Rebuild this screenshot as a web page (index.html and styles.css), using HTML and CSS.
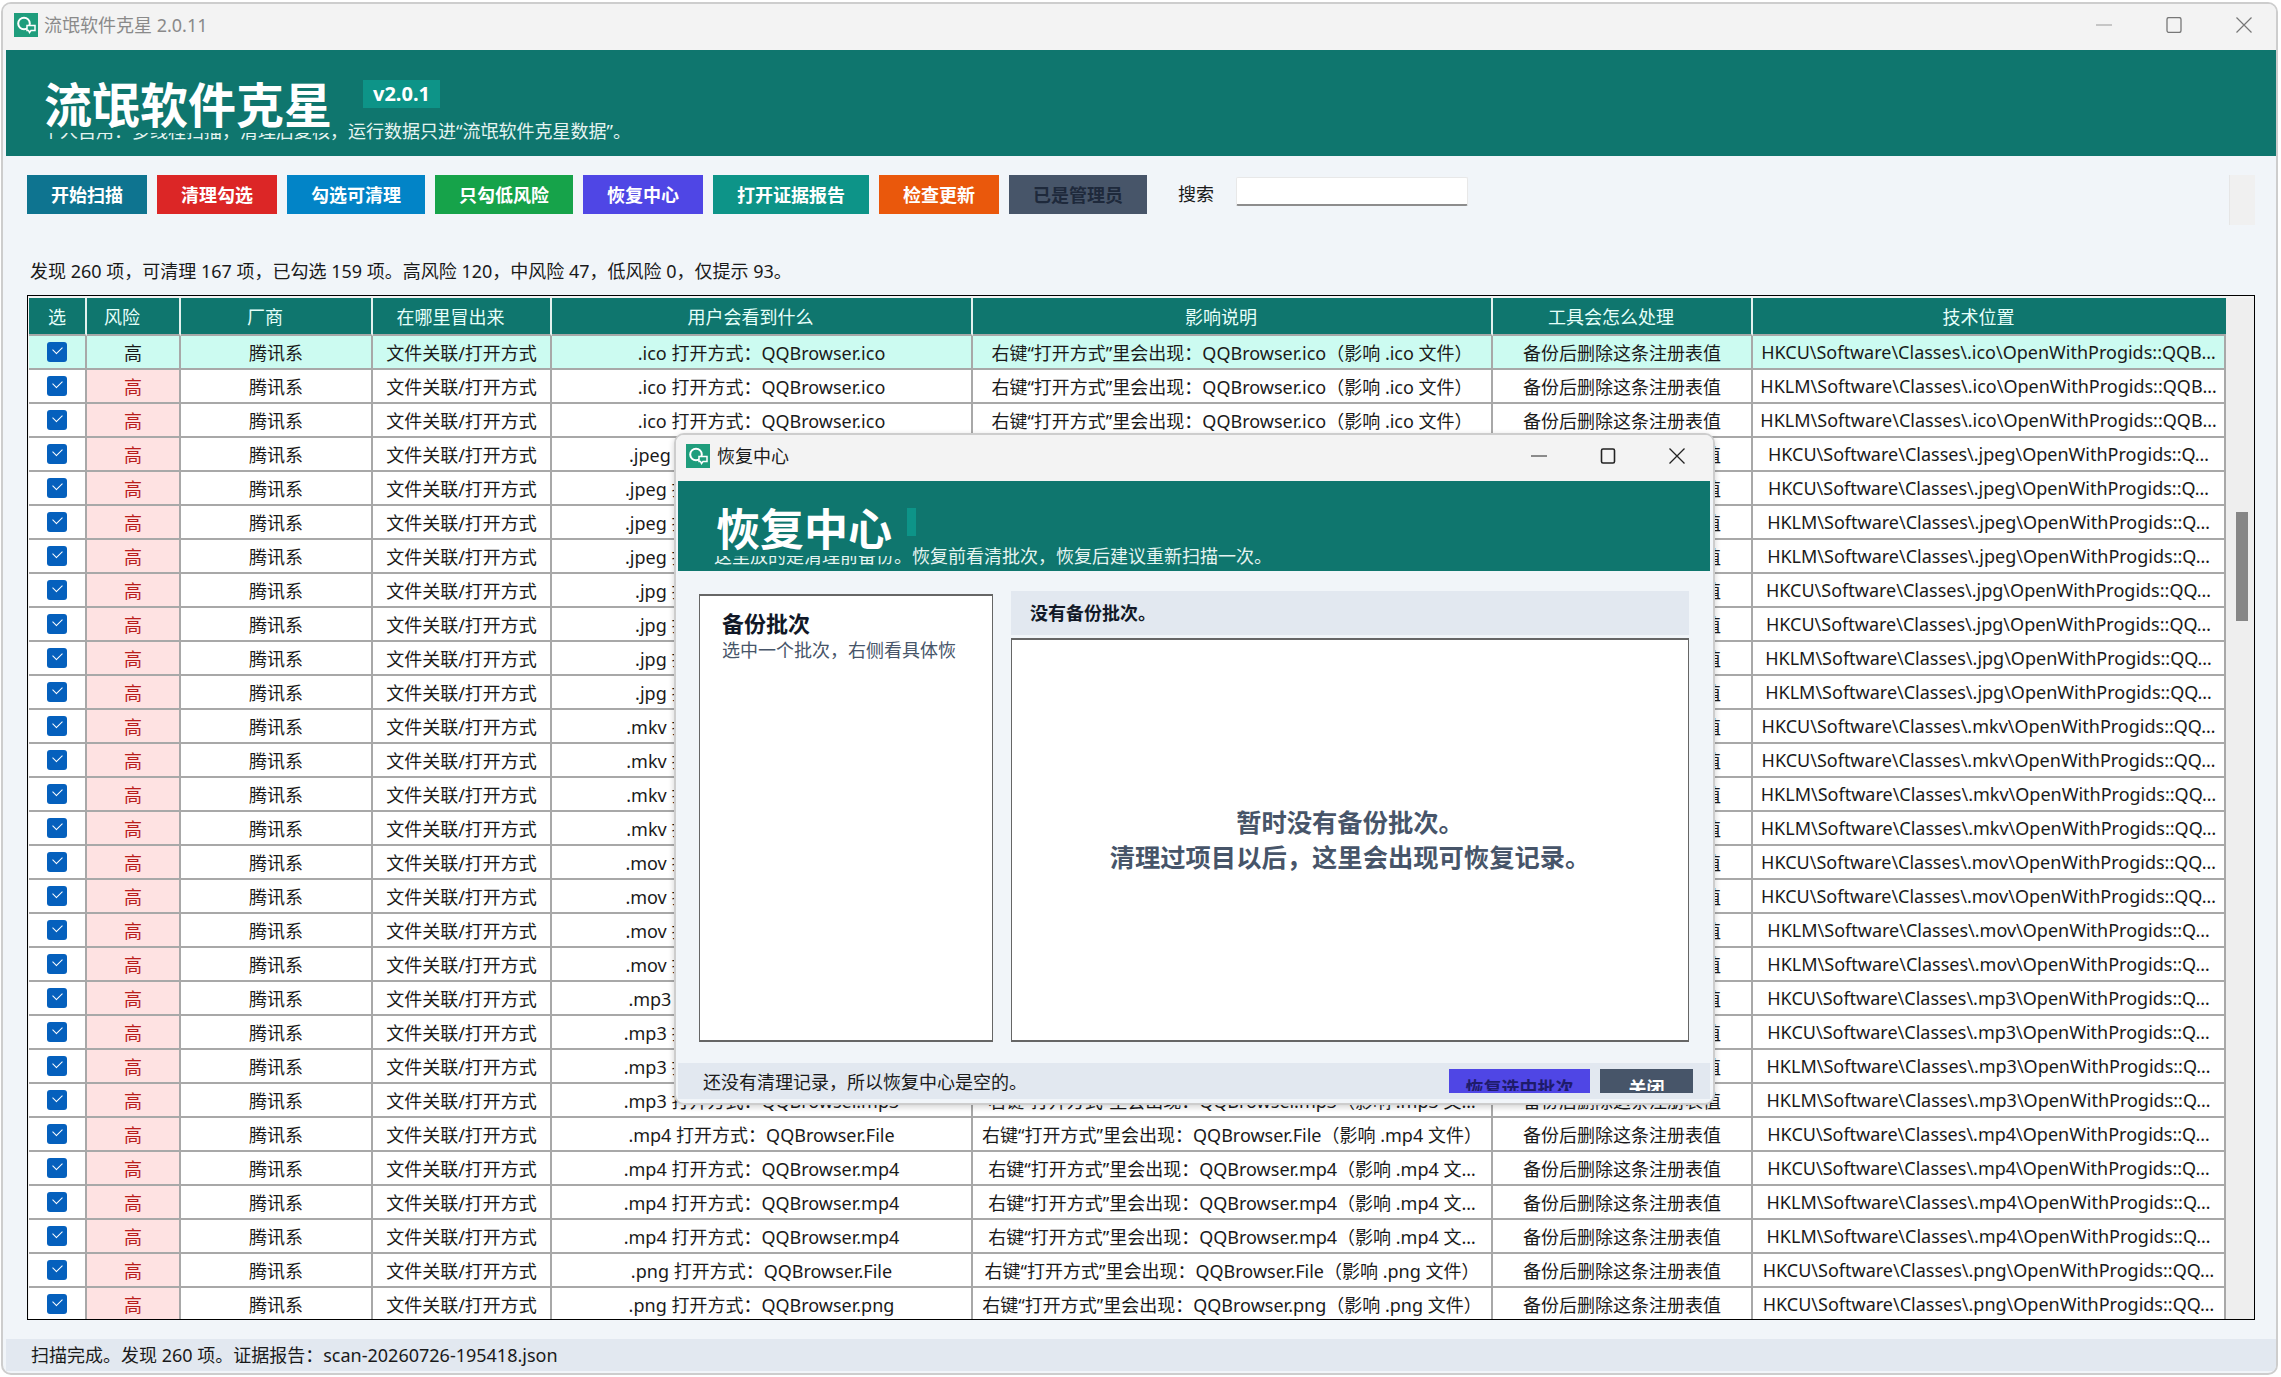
FILE: index.html
```html
<!DOCTYPE html>
<html lang="zh-CN">
<head>
    <meta charset="UTF-8">
    <meta name="viewport" content="width=device-width, initial-scale=1.0">
    <title>流氓软件克星 2.0.11</title>
    <link rel="stylesheet" href="styles.css">
</head>
<body>
    <div class="window">
        <div class="titlebar">
            <svg class="app-icon" viewBox="0 0 24 24"><rect width="24" height="24" fill="#1f9d7c"/><circle cx="10" cy="10.5" r="5.8" fill="none" stroke="#fff" stroke-width="2"/><path d="M13 12.5h8v5h-4l-1.5 2-1-2H13z" fill="#1f9d7c" stroke="#fff" stroke-width="1.5"/></svg>
            <span class="titlebar-text">流氓软件克星 2.0.11</span>
            <div class="win-controls">
                <svg viewBox="0 0 16 16"><path d="M0 8h16" stroke="#999" fill="none"/></svg>
                <svg viewBox="0 0 16 16"><rect x="1" y="0.5" width="14" height="15" rx="2" stroke="#777" fill="none" stroke-width="1.3"/></svg>
                <svg viewBox="0 0 16 16"><path d="M0.5 0.5l15 15M15.5 0.5l-15 15" stroke="#777" fill="none" stroke-width="1.2"/></svg>
            </div>
        </div>

        <div class="hero">
            <div class="hero-top">
                <h1 class="hero-title">流氓软件克星</h1>
                <span class="badge">v2.0.1</span>
            </div>
            <p class="hero-sub">个人自用&#xFF1A;多线程扫描&#xFF0C;清理后复核&#xFF0C;运行数据只进“流氓软件克星数据”。</p>
        </div>

        <div class="toolbar">
            <button class="btn btn-scan">开始扫描</button>
            <button class="btn btn-clean">清理勾选</button>
            <button class="btn btn-pick">勾选可清理</button>
            <button class="btn btn-low">只勾低风险</button>
            <button class="btn btn-restore">恢复中心</button>
            <button class="btn btn-report">打开证据报告</button>
            <button class="btn btn-update">检查更新</button>
            <button class="btn btn-admin">已是管理员</button>
            <label class="search-label">搜索</label>
            <input class="search-input" type="text">
            <div class="toolbar-tail"></div>
        </div>

        <p class="summary">发现 260 项&#xFF0C;可清理 167 项&#xFF0C;已勾选 159 项。高风险 120&#xFF0C;中风险 47&#xFF0C;低风险 0&#xFF0C;仅提示 93。</p>

        <div class="table-frame">
            <table class="results">
                <colgroup>
                    <col class="c-pick"><col class="c-risk"><col class="c-vendor"><col class="c-where">
                    <col class="c-see"><col class="c-effect"><col class="c-action"><col class="c-path">
                </colgroup>
                <thead>
                    <tr><th>选</th><th>风险</th><th>厂商</th><th>在哪里冒出来</th><th>用户会看到什么</th><th>影响说明</th><th>工具会怎么处理</th><th>技术位置</th></tr>
                </thead>
                <tbody id="rows"></tbody>
            </table>
            <div class="scrollbar"><div class="scroll-thumb"></div></div>
        </div>

        <div class="statusbar">扫描完成。发现 260 项。证据报告&#xFF1A;scan-20260726-195418.json</div>
    </div>

    <div class="dialog">
        <div class="titlebar dialog-titlebar">
            <svg class="app-icon" viewBox="0 0 24 24"><rect width="24" height="24" fill="#1f9d7c"/><circle cx="10" cy="10.5" r="5.8" fill="none" stroke="#fff" stroke-width="2"/><path d="M13 12.5h8v5h-4l-1.5 2-1-2H13z" fill="#1f9d7c" stroke="#fff" stroke-width="1.5"/></svg>
            <span class="dialog-title">恢复中心</span>
            <div class="win-controls dialog-controls">
                <svg viewBox="0 0 16 16"><path d="M0 8h16" stroke="#222" fill="none"/></svg>
                <svg viewBox="0 0 16 16"><rect x="1.5" y="1" width="13" height="14" rx="1.5" stroke="#222" fill="none" stroke-width="1.6"/></svg>
                <svg viewBox="0 0 16 16"><path d="M0.5 0.5l15 15M15.5 0.5l-15 15" stroke="#222" fill="none" stroke-width="1.3"/></svg>
            </div>
        </div>
        <div class="dialog-hero">
            <div class="dialog-hero-top">
                <h2 class="dialog-heading">恢复中心</h2>
                <span class="dialog-badge"></span>
            </div>
            <p class="dialog-sub">这里放的是清理前备份。恢复前看清批次&#xFF0C;恢复后建议重新扫描一次。</p>
        </div>
        <div class="dialog-body">
            <div class="batch-panel">
                <div class="batch-title">备份批次</div>
                <div class="batch-hint">选中一个批次&#xFF0C;右侧看具体恢</div>
            </div>
            <div class="detail">
                <div class="detail-bar">没有备份批次。</div>
                <div class="detail-box">暂时没有备份批次。<br>清理过项目以后&#xFF0C;这里会出现可恢复记录。</div>
            </div>
        </div>
        <div class="dialog-footer">
            <span class="footer-text">还没有清理记录&#xFF0C;所以恢复中心是空的。</span>
            <button class="btn-small btn-restore"><span>恢复选中批次</span></button>
            <button class="btn-small btn-close"><span>关闭</span></button>
        </div>
    </div>

    <script>
        // [扩展名, 关联程序, 影响说明尾部, 技术位置 hive, 路径尾部]
        const rows = [
            ['ico', 'QQBrowser.ico', '.ico 文件\uFF09', 'HKCU', 'QQB…'],
            ['ico', 'QQBrowser.ico', '.ico 文件\uFF09', 'HKLM', 'QQB…'],
            ['ico', 'QQBrowser.ico', '.ico 文件\uFF09', 'HKLM', 'QQB…'],
            ['jpeg', 'QQBrowser.File', '.jpeg 文件\uFF09', 'HKCU', 'Q…'],
            ['jpeg', 'QQBrowser.jpeg', '.jpeg 文…', 'HKCU', 'Q…'],
            ['jpeg', 'QQBrowser.jpeg', '.jpeg 文…', 'HKLM', 'Q…'],
            ['jpeg', 'QQBrowser.jpeg', '.jpeg 文…', 'HKLM', 'Q…'],
            ['jpg', 'QQBrowser.jpg', '.jpg 文件\uFF09', 'HKCU', 'QQ…'],
            ['jpg', 'QQBrowser.jpg', '.jpg 文件\uFF09', 'HKCU', 'QQ…'],
            ['jpg', 'QQBrowser.jpg', '.jpg 文件\uFF09', 'HKLM', 'QQ…'],
            ['jpg', 'QQBrowser.jpg', '.jpg 文件\uFF09', 'HKLM', 'QQ…'],
            ['mkv', 'QQBrowser.mkv', '.mkv 文件\uFF09', 'HKCU', 'QQ…'],
            ['mkv', 'QQBrowser.mkv', '.mkv 文件\uFF09', 'HKCU', 'QQ…'],
            ['mkv', 'QQBrowser.mkv', '.mkv 文件\uFF09', 'HKLM', 'QQ…'],
            ['mkv', 'QQBrowser.mkv', '.mkv 文件\uFF09', 'HKLM', 'QQ…'],
            ['mov', 'QQBrowser.mov', '.mov 文件\uFF09', 'HKCU', 'QQ…'],
            ['mov', 'QQBrowser.mov', '.mov 文件\uFF09', 'HKCU', 'QQ…'],
            ['mov', 'QQBrowser.mov', '.mov 文件\uFF09', 'HKLM', 'Q…'],
            ['mov', 'QQBrowser.mov', '.mov 文件\uFF09', 'HKLM', 'Q…'],
            ['mp3', 'QQBrowser.File', '.mp3 文件\uFF09', 'HKCU', 'Q…'],
            ['mp3', 'QQBrowser.mp3', '.mp3 文…', 'HKCU', 'Q…'],
            ['mp3', 'QQBrowser.mp3', '.mp3 文…', 'HKLM', 'Q…'],
            ['mp3', 'QQBrowser.mp3', '.mp3 文…', 'HKLM', 'Q…'],
            ['mp4', 'QQBrowser.File', '.mp4 文件\uFF09', 'HKCU', 'Q…'],
            ['mp4', 'QQBrowser.mp4', '.mp4 文…', 'HKCU', 'Q…'],
            ['mp4', 'QQBrowser.mp4', '.mp4 文…', 'HKLM', 'Q…'],
            ['mp4', 'QQBrowser.mp4', '.mp4 文…', 'HKLM', 'Q…'],
            ['png', 'QQBrowser.File', '.png 文件\uFF09', 'HKCU', 'QQ…'],
            ['png', 'QQBrowser.png', '.png 文件\uFF09', 'HKCU', 'QQ…']
        ];

        const tbody = document.getElementById('rows');
        tbody.innerHTML = rows.map(([ext, app, tail, hive, end], i) => `
            <tr class="${i === 0 ? 'selected' : ''}">
                <td><span class="check"></span></td>
                <td class="risk-high">高</td>
                <td>腾讯系</td>
                <td>文件关联/打开方式</td>
                <td>.${ext} 打开方式\uFF1A${app}</td>
                <td>右键“打开方式”里会出现\uFF1A${app}\uFF08影响 ${tail}</td>
                <td>备份后删除这条注册表值</td>
                <td>${hive}\\Software\\Classes\\.${ext}\\OpenWithProgids::${end}</td>
            </tr>`).join('');
    </script>
</body>
</html>
```

FILE: styles.css
```css
* {
    box-sizing: border-box;
}

body {
    margin: 0;
    background-color: #fff;
    font-family: "Noto Sans", "Noto Sans CJK SC", sans-serif;
    font-size: 18px;
    color: #1a1a1a;
    height: 1377px;
    overflow: hidden;
}

h1, h2, p {
    margin: 0;
}

.window {
    width: 2277px;
    height: 1373px;
    margin: 2px 0 0 1px;
    border: 2px solid #cdcdcd;
    border-radius: 10px;
    background-color: #f1f5f9;
    overflow: hidden;
    display: flex;
    flex-direction: column;
}

.titlebar {
    height: 46px;
    flex: none;
    display: flex;
    align-items: center;
    padding: 0 0 5px 11px;
    background-color: #f3f3f3;
}

.app-icon {
    width: 24px;
    height: 24px;
    flex: none;
}

.titlebar-text {
    margin: 0 0 2px 6px;
    color: #8a8a8a;
}

.win-controls {
    margin-left: auto;
    display: flex;
    gap: 54px;
    padding-right: 24px;
}

.win-controls svg {
    width: 16px;
    height: 16px;
}

.hero {
    height: 106px;
    flex: none;
    margin-left: 3px;
    padding-left: 36px;
    background-color: #0f766e;
    color: #fff;
    overflow: hidden;
}

.hero-top {
    height: 83px;
    display: flex;
    align-items: flex-start;
}

.hero-title {
    position: relative;
    z-index: 1;
    width: 305px;
    height: 83px;
    padding: 25px 0 0 2px;
    background-color: #0f766e;
    font-size: 48px;
    line-height: 60px;
    font-weight: 700;
    white-space: nowrap;
}

.badge {
    margin: 30px 0 0 16px;
    height: 28px;
    padding: 0 10px;
    background-color: #0d9488;
    font-size: 20px;
    line-height: 27px;
    font-weight: 700;
}

.hero-sub {
    margin-top: -15px;
    line-height: 26px;
    color: #e6f4f1;
    white-space: nowrap;
}

.toolbar {
    height: 50px;
    flex: none;
    margin: 19px 21px 0 24px;
    display: flex;
    gap: 10px;
    align-items: flex-start;
}

.btn {
    height: 39px;
    padding: 0 24px 2px;
    border: none;
    font-family: inherit;
    font-size: 18px;
    font-weight: 700;
    color: #fff;
}

.btn-scan { background-color: #0e7490; }
.btn-clean { background-color: #dc2626; }
.btn-pick { background-color: #0284c7; }
.btn-low { background-color: #16a34a; }
.btn-restore { background-color: #4f46e5; }
.btn-report { background-color: #0d9488; }
.btn-update { background-color: #ea580c; }
.btn-admin { background-color: #475569; color: #1e293b; }

.search-label {
    margin-left: 21px;
    line-height: 39px;
}

.search-input {
    width: 232px;
    height: 29px;
    margin: 2px 0 0 12px;
    border: 1px solid #e8e8e8;
    border-bottom: 2px solid #8d8d8d;
    border-radius: 2px;
    background-color: #fff;
}

.toolbar-tail {
    width: 26px;
    height: 50px;
    margin-left: auto;
    background-color: #f0f0f0;
    border-left: 1px solid #e6e6e6;
}

.summary {
    margin: 33px 0 0 27px;
    line-height: 26px;
    flex: none;
}

.table-frame {
    width: 2228px;
    height: 1025px;
    flex: none;
    margin: 11px 0 0 24px;
    padding: 2px 0 0 1px;
    border: 1px solid #000;
    background-color: #f4f4f4;
    display: flex;
    overflow: hidden;
}

.results {
    width: 2197px;
    flex: none;
    table-layout: fixed;
    border-collapse: separate;
    border-spacing: 0;
    background-color: #fff;
}

.c-pick { width: 58px; }
.c-risk { width: 94px; }
.c-vendor { width: 192px; }
.c-where { width: 179px; }
.c-see { width: 421px; }
.c-effect { width: 520px; }
.c-action { width: 260px; }
.c-path { width: 473px; }

.results th {
    height: 38px;
    padding: 0 22px 0 0;
    background-color: #0f766e;
    border-right: 2px solid #e3f1ee;
    border-bottom: 2px solid #a8a8a8;
    color: #e6fffa;
    font-weight: 400;
    text-align: center;
}

.results th:first-child {
    padding-right: 0;
}

.results th:last-child {
    border-right: none;
}

.results td {
    height: 34px;
    padding: 0;
    border-right: 2px solid #a8a8a8;
    border-bottom: 2px solid #a8a8a8;
    text-align: center;
    white-space: nowrap;
    overflow: hidden;
}

.results td.risk-high {
    background-color: #fee2e2;
    color: #b91c1c;
}

.results .selected td,
.results .selected td.risk-high {
    background-color: #ccfbf1;
    color: #1a1a1a;
}

.check {
    display: block;
    width: 20px;
    height: 20px;
    margin: 0 auto 1px;
    border-radius: 3px;
    background-color: #0560bd;
    position: relative;
}

.check::after {
    content: "";
    position: absolute;
    left: 6px;
    top: 4px;
    width: 8px;
    height: 5px;
    border-left: 1px solid #fff;
    border-bottom: 1px solid #fff;
    transform: rotate(-45deg);
}

.scrollbar {
    flex: 1;
    background-color: #eee;
    padding: 214px 0 0 10px;
}

.scroll-thumb {
    width: 12px;
    height: 109px;
    background-color: #868686;
}

.statusbar {
    height: 32px;
    flex: none;
    margin: 19px 0 0 3px;
    padding-left: 25px;
    background-color: #e2e8f0;
    line-height: 32px;
}

.dialog {
    position: absolute;
    left: 674px;
    top: 433px;
    width: 1041px;
    height: 672px;
    border: 2px solid #cdcdcd;
    border-radius: 10px;
    background-color: #f1f5f9;
    box-shadow: 0 2px 6px rgba(0, 0, 0, 0.18);
    overflow: hidden;
    display: flex;
    flex-direction: column;
}

.dialog-titlebar {
    padding-left: 10px;
}

.dialog-title {
    margin: 0 0 2px 7px;
}

.dialog-controls {
    gap: 53px;
    padding-right: 28px;
}

.dialog-hero {
    height: 90px;
    flex: none;
    margin: 0 3px 0 2px;
    padding-left: 36px;
    background-color: #0f766e;
    color: #fff;
    overflow: hidden;
}

.dialog-hero-top {
    height: 75px;
    display: flex;
    align-items: flex-start;
}

.dialog-heading {
    position: relative;
    z-index: 1;
    width: 193px;
    height: 75px;
    padding: 20px 0 0 2px;
    background-color: #0f766e;
    font-size: 44px;
    line-height: 56px;
    font-weight: 700;
}

.dialog-badge {
    width: 9px;
    height: 28px;
    margin-top: 27px;
    background-color: #0d9488;
}

.dialog-sub {
    margin-top: -13px;
    line-height: 26px;
    color: #e6f4f1;
    white-space: nowrap;
}

.dialog-body {
    flex: 1;
    padding: 20px 24px 21px 23px;
    display: grid;
    grid-template-columns: 294px 678px;
    gap: 18px;
}

.batch-panel {
    margin-top: 3px;
    padding: 13px 22px;
    background-color: #fff;
    border: 1px solid #666;
    border-top-width: 2px;
    border-bottom-width: 2px;
}

.batch-title {
    font-size: 22px;
    line-height: 28px;
    font-weight: 700;
    color: #111827;
}

.batch-hint {
    line-height: 26px;
    color: #475569;
    white-space: nowrap;
}

.detail {
    display: flex;
    flex-direction: column;
    gap: 3px;
}

.detail-bar {
    height: 44px;
    flex: none;
    padding-left: 19px;
    background-color: #e2e8f0;
    color: #111827;
    font-weight: 700;
    line-height: 44px;
}

.detail-box {
    flex: 1;
    display: flex;
    flex-direction: column;
    justify-content: center;
    background-color: #fff;
    border: 1px solid #666;
    border-top-width: 2px;
    border-bottom-width: 2px;
    color: #475569;
    font-size: 25.3px;
    line-height: 35px;
    font-weight: 700;
    text-align: center;
}

.dialog-footer {
    height: 36px;
    flex: none;
    margin: 0 3px 4px 2px;
    padding: 6px 17px 0 25px;
    background-color: #e2e8f0;
    display: flex;
    gap: 10px;
    align-items: flex-start;
}

.footer-text {
    margin-right: auto;
    line-height: 26px;
}

.btn-small {
    width: 141px;
    height: 24px;
    padding: 7px 0 0;
    border: none;
    font-family: inherit;
    font-size: 18px;
    font-weight: 700;
    color: #1e1b6b;
}

.btn-small span {
    display: block;
    height: 13px;
    line-height: 20px;
    overflow: hidden;
}

.btn-close {
    width: 93px;
    background-color: #475569;
    color: #fff;
}
```
